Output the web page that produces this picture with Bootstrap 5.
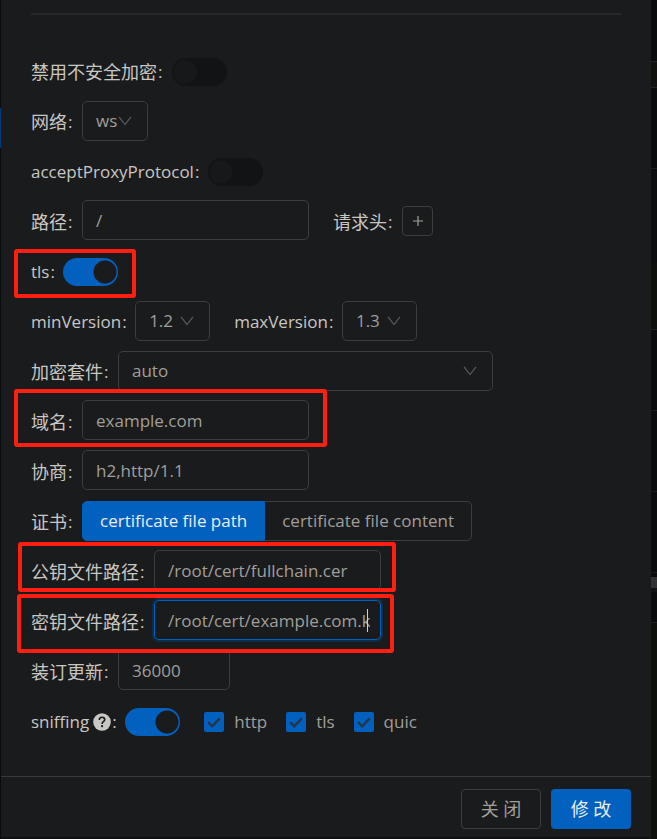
<!DOCTYPE html>
<html lang="zh-CN" data-bs-theme="dark">
<head>
<meta charset="utf-8">
<meta name="viewport" content="width=device-width, initial-scale=1">
<title>入站设置</title>
<link href="https://cdn.jsdelivr.net/npm/bootstrap@5.3.0/dist/css/bootstrap.min.css" rel="stylesheet">
<style>
:root{--panel:#1a1b1c;--line:#3b3d3e;--blue:#0260be;--label:#c8c7c4;--value:#a09f9b;--mark:#ff1f12}
body{background:#0a0b0c;color:var(--label);font:17px/24px "Open Sans","Noto Sans CJK SC",sans-serif}
.edge-left{width:1px;background:linear-gradient(#0a0b0c 108px,#023a73 108px 148px,#0a0b0c 148px)}
.edge-right{width:6px;background:linear-gradient(#0a0b0c 61px,#232425 61px 62px,#111210 62px 87px,#232425 87px 88px,#0a0b0c 88px 168px,#1c1d1e 168px 169px,#0b0c0d 169px 263px,#0e100e 263px 329px,#1c1d1e 329px 330px,#0a0b0c 330px 410px,#1c1d1e 410px 411px,#0a0b0c 411px 491px,#1c1d1e 491px 492px,#0a0b0c 492px 572px,#1c1d1e 572px 573px,#0a0b0c 573px 577px,#303233 577px 588px,#111213 588px 592px,#0a0b0c 592px 622px,#1c1d1e 622px 623px,#0e100e 623px)}
.panel{background:var(--panel);min-width:0}
.panel-body{padding:13px 30px 29px}
.rule{height:2px;background:#262829;margin-bottom:32px}
.line-row{min-height:50px}
.field{position:relative;min-height:50px;margin-right:24px}
.field.tight{margin-right:0}
.caption{display:flex;align-items:center;white-space:nowrap}
.cjk{font-size:18px}
.sep{width:15px;padding-left:1px;font-size:17px}
.latin .sep{width:14px}
.form-control,.form-select{height:40px;padding:4px 13px;border:1px solid var(--line);border-radius:5px;background-color:transparent;color:var(--value);font-size:17px;line-height:30px;max-width:100%}
.form-control{margin-bottom:4px;width:227px;padding-right:10px}
.form-select{margin-bottom:2px;background-color:var(--panel);background-image:url("data:image/svg+xml,%3Csvg xmlns='http://www.w3.org/2000/svg' viewBox='0 0 14 10'%3E%3Cpath d='M1 .8 7 8.6 13 .8' fill='none' stroke='%23595b5c' stroke-width='1.2'/%3E%3C/svg%3E");background-size:14px 10px;background-position:right 15px top 14px}
.w-net{width:66px}.w-ver{width:75px}.w-suite{width:375px}
.form-control.w-num{width:112px}
.form-control.active-input{border-color:#0260be;box-shadow:0 0 0 2px #0d2d4c}
.form-switch{padding:0;margin:0;min-height:0;display:flex}
.form-switch .form-check-input{width:55px;height:28px;margin:0;border:0;border-radius:14px;background-color:#121314;background-repeat:no-repeat;background-size:26px 28px;background-position:left center;background-image:radial-gradient(circle,#171819 11px,transparent 12px)!important;box-shadow:none}
.form-switch .form-check-input:checked{background-color:var(--blue);background-position:right center;background-image:radial-gradient(circle,#1a1b1c 11px,transparent 12px)!important}
.add-btn{width:31px;height:30px;border:1px solid var(--line);border-radius:4px;color:var(--value);margin-bottom:2px}
.tick .form-check-input{width:20px;height:20px;margin:0 10px 0 0;border-radius:2px;border:0;float:none;background-size:20px;box-shadow:none}
.tick .form-check-input:checked{background-color:var(--blue);background-image:url("data:image/svg+xml,%3Csvg xmlns='http://www.w3.org/2000/svg' viewBox='0 0 20 20'%3E%3Cpath d='M4.3 10.2 8.2 14.4 15.8 6.4' fill='none' stroke='%23273544' stroke-width='2.3'/%3E%3C/svg%3E")}
.tick{padding:0;margin:0 19px 0 0;color:var(--value)}
.choice .btn{height:40px;padding:4px 17px;line-height:30px;font-size:17px;border:1px solid var(--line);border-radius:5px;color:var(--value)}
.choice{margin-bottom:2px}
.choice .btn-check:checked+.btn{background:var(--blue);border-color:var(--blue);color:#e9eef4}
.frame{position:absolute;border:4px solid var(--mark);border-radius:3px;z-index:3;pointer-events:none}
.frame-tls{inset:2px -18px -1px -17px}
.frame-domain{inset:-8px -18px 0 -17px}
.frame-public{inset:-5px -15px 5px -13px}
.frame-key{inset:-3px -13px -6px -14px}
.caret{position:absolute;right:13px;top:12px;width:1px;height:23px;background:#d0d0cc}
.help{width:18px;height:18px;margin-left:4px}
.panel-foot{border-top:1px solid #37393a;padding:12px 20px 8px;gap:10px}
.panel-foot .btn{height:40px;padding:4px 16px;line-height:30px;font-size:18px;border-radius:4px;min-width:80px}
.btn-close-form{border:1px solid var(--line);color:var(--value)}
.btn-save,.btn-save:hover{background:var(--blue);color:#e9eef4}
.floor{height:2px;background:#101112}
</style>
</head>
<body>
<div class="d-flex min-vh-100">
<div class="edge-left flex-shrink-0"></div>
<main class="panel flex-grow-1 d-flex flex-column">
<form class="panel-body flex-grow-1">
  <div class="rule"></div>
  <div class="line-row d-flex align-items-center">
    <label class="caption cjk" for="secure">禁用不安全加密<span class="sep">:</span></label>
    <div class="form-check form-switch"><input class="form-check-input" type="checkbox" role="switch" id="secure"></div>
  </div>
  <div class="line-row d-flex align-items-center">
    <label class="caption cjk" for="network">网络<span class="sep">:</span></label>
    <select class="form-select w-net pe-0" id="network"><option>ws</option></select>
  </div>
  <div class="line-row d-flex align-items-center">
    <label class="caption latin" for="proxy">acceptProxyProtocol<span class="sep">:</span></label>
    <div class="form-check form-switch"><input class="form-check-input" type="checkbox" role="switch" id="proxy"></div>
  </div>
  <div class="line-row d-flex flex-wrap">
    <div class="field d-flex align-items-center">
      <label class="caption cjk" for="path">路径<span class="sep">:</span></label>
      <input class="form-control" id="path" value="/">
    </div>
    <div class="field d-flex align-items-center">
      <label class="caption cjk" for="addHeader">请求头<span class="sep">:</span></label>
      <button type="button" class="btn add-btn p-0 d-flex align-items-center justify-content-center" id="addHeader" aria-label="添加请求头"><svg width="10" height="10" viewBox="0 0 10 10" aria-hidden="true"><path d="M5 0v10M0 5h10" stroke="currentColor" stroke-width="1.2"/></svg></button>
    </div>
  </div>
  <div class="line-row d-flex">
    <div class="field d-flex align-items-center">
      <label class="caption latin" for="tls">tls<span class="sep">:</span></label>
      <div class="form-check form-switch"><input class="form-check-input" type="checkbox" role="switch" id="tls" checked></div>
      <span class="frame frame-tls"></span>
    </div>
  </div>
  <div class="line-row d-flex flex-wrap">
    <div class="field d-flex align-items-center">
      <label class="caption latin" for="minv">minVersion<span class="sep">:</span></label>
      <select class="form-select w-ver pe-0" id="minv"><option>1.2</option></select>
    </div>
    <div class="field d-flex align-items-center">
      <label class="caption latin" for="maxv">maxVersion<span class="sep">:</span></label>
      <select class="form-select w-ver pe-0" id="maxv"><option>1.3</option></select>
    </div>
  </div>
  <div class="line-row d-flex align-items-center">
    <label class="caption cjk" for="suite">加密套件<span class="sep">:</span></label>
    <select class="form-select w-suite" id="suite"><option>auto</option></select>
  </div>
  <div class="line-row d-flex">
    <div class="field d-flex align-items-center">
      <label class="caption cjk" for="domain">域名<span class="sep">:</span></label>
      <input class="form-control" id="domain" value="example.com">
      <span class="frame frame-domain"></span>
    </div>
  </div>
  <div class="line-row d-flex align-items-center">
    <label class="caption cjk" for="alpn">协商<span class="sep">:</span></label>
    <input class="form-control" id="alpn" value="h2,http/1.1">
  </div>
  <div class="line-row d-flex align-items-center">
    <span class="caption cjk" id="certLabel">证书<span class="sep">:</span></span>
    <div class="btn-group choice" role="group" aria-labelledby="certLabel">
      <input type="radio" class="btn-check" name="cert" id="certPath" checked><label class="btn" for="certPath">certificate file path</label>
      <input type="radio" class="btn-check" name="cert" id="certContent"><label class="btn" for="certContent">certificate file content</label>
    </div>
  </div>
  <div class="line-row d-flex">
    <div class="field d-flex align-items-center">
      <label class="caption cjk" for="pub">公钥文件路径<span class="sep">:</span></label>
      <input class="form-control" id="pub" value="/root/cert/fullchain.cer">
      <span class="frame frame-public"></span>
    </div>
  </div>
  <div class="line-row d-flex">
    <div class="field d-flex align-items-center">
      <label class="caption cjk" for="key">密钥文件路径<span class="sep">:</span></label>
      <input class="form-control active-input" id="key" value="/root/cert/example.com.key">
      <span class="caret"></span>
      <span class="frame frame-key"></span>
    </div>
  </div>
  <div class="line-row d-flex align-items-center">
    <label class="caption cjk" for="staple">装订更新<span class="sep">:</span></label>
    <input class="form-control w-num" id="staple" value="36000">
  </div>
  <div class="line-row d-flex flex-wrap">
    <div class="field d-flex align-items-center">
      <label class="caption latin" for="sniff">sniffing<svg class="help" viewBox="0 0 18 18" aria-hidden="true"><circle cx="9" cy="9" r="8.8" fill="#c8c7c4"/><path d="M6.3 7.1C6.3 5.3 7.5 4.3 9 4.3s2.7 1 2.7 2.5c0 1.9-2.6 2-2.6 4.1" fill="none" stroke="#1a1b1c" stroke-width="1.6"/><circle cx="9.1" cy="13.2" r="1.1" fill="#1a1b1c"/></svg><span class="sep">:</span></label>
      <div class="form-check form-switch"><input class="form-check-input" type="checkbox" role="switch" id="sniff" checked></div>
    </div>
    <div class="field tight d-flex align-items-center">
      <div class="form-check tick d-flex align-items-center"><input class="form-check-input" type="checkbox" id="cHttp" checked><label for="cHttp">http</label></div>
      <div class="form-check tick d-flex align-items-center"><input class="form-check-input" type="checkbox" id="cTls" checked><label for="cTls">tls</label></div>
      <div class="form-check tick d-flex align-items-center"><input class="form-check-input" type="checkbox" id="cQuic" checked><label for="cQuic">quic</label></div>
    </div>
  </div>
</form>
<footer class="panel-foot d-flex justify-content-end">
  <button type="button" class="btn btn-close-form">关 闭</button>
  <button type="button" class="btn btn-save">修 改</button>
</footer>
<div class="floor"></div>
</main>
<div class="edge-right flex-shrink-0"></div>
</div>
<script src="https://cdn.jsdelivr.net/npm/bootstrap@5.3.0/dist/js/bootstrap.bundle.min.js"></script>
</body>
</html>
